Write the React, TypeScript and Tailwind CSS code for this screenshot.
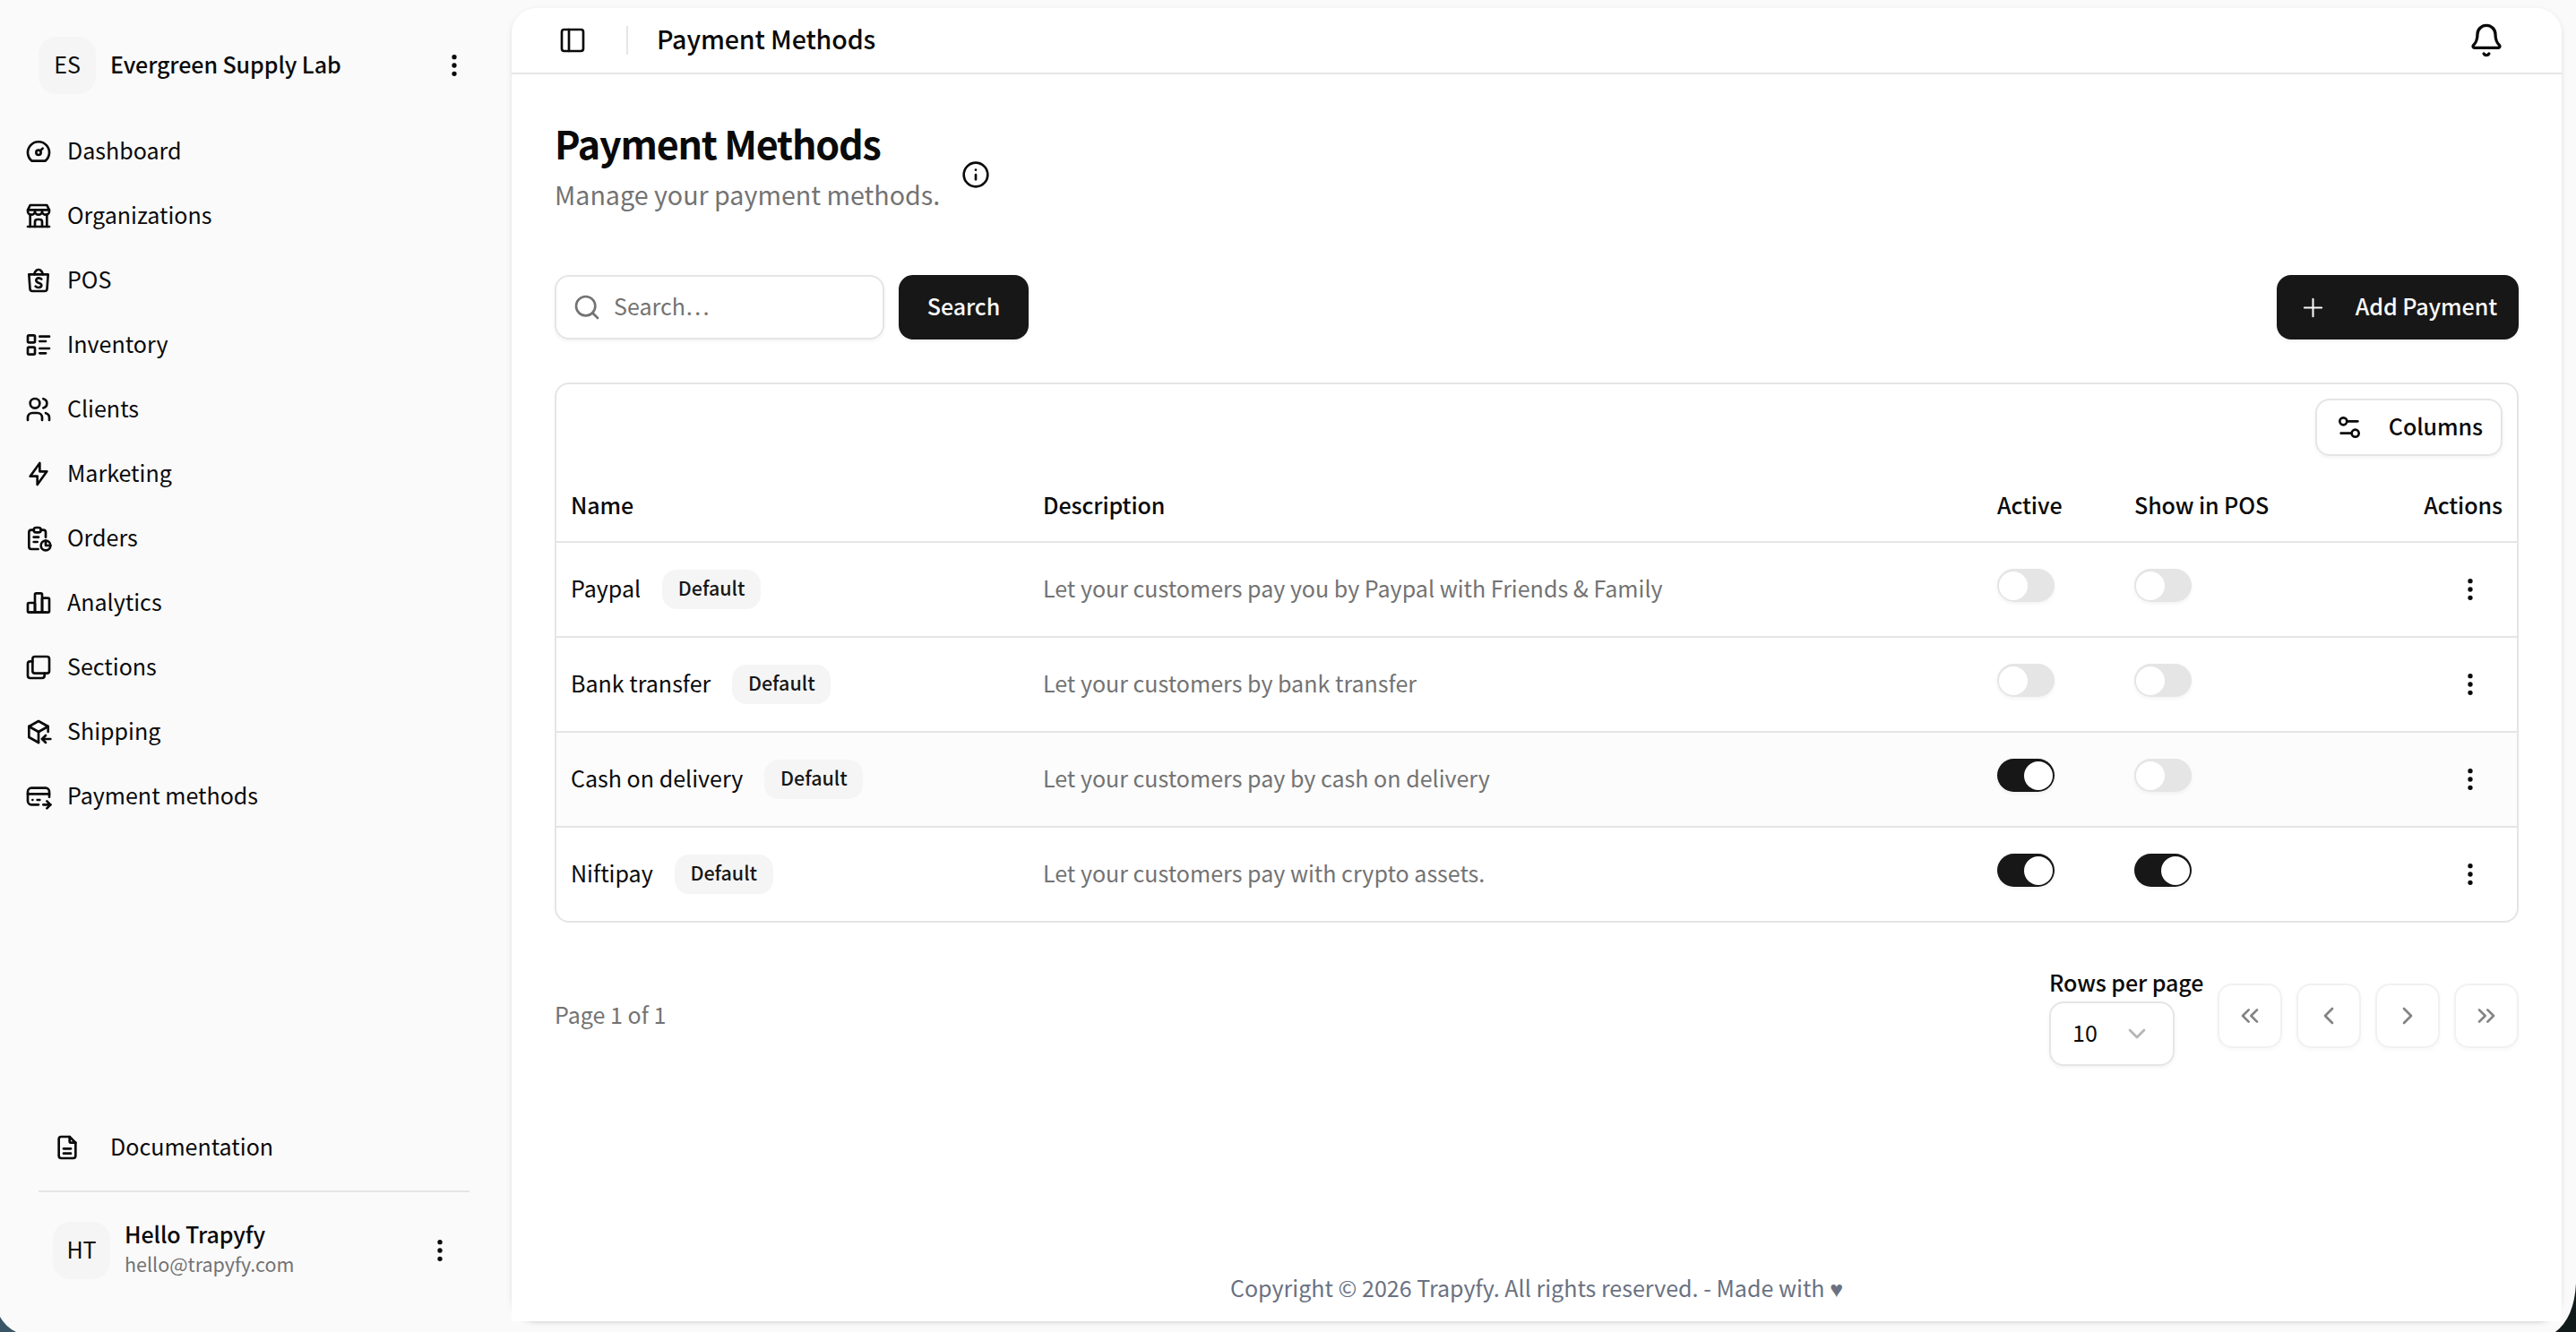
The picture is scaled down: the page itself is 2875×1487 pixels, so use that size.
import type { ReactNode } from "react";
import {
  Bell,
  ChevronDown,
  ChevronLeft,
  ChevronRight,
  ChevronsLeft,
  ChevronsRight,
  EllipsisVertical,
  Info,
  PanelLeft,
  Plus,
  Search,
  Settings2,
} from "lucide-react";
import {
  TbBolt,
  TbBoxMultiple,
  TbBrandShopee,
  TbBuildingStore,
  TbChartBar,
  TbCreditCardPay,
  TbDashboard,
  TbFileDescription,
  TbListDetails,
  TbPackageImport,
  TbReport,
  TbUsers,
} from "react-icons/tb";

const navItems = [
  { label: "Dashboard", icon: TbDashboard },
  { label: "Organizations", icon: TbBuildingStore },
  { label: "POS", icon: TbBrandShopee },
  { label: "Inventory", icon: TbListDetails },
  { label: "Clients", icon: TbUsers },
  { label: "Marketing", icon: TbBolt },
  { label: "Orders", icon: TbReport },
  { label: "Analytics", icon: TbChartBar },
  { label: "Sections", icon: TbBoxMultiple },
  { label: "Shipping", icon: TbPackageImport },
  { label: "Payment methods", icon: TbCreditCardPay },
];

const methods = [
  {
    name: "Paypal",
    description: "Let your customers pay you by Paypal with Friends & Family",
    active: false,
    pos: false,
  },
  {
    name: "Bank transfer",
    description: "Let your customers by bank transfer",
    active: false,
    pos: false,
  },
  {
    name: "Cash on delivery",
    description: "Let your customers pay by cash on delivery",
    active: true,
    pos: false,
    highlighted: true,
  },
  {
    name: "Niftipay",
    description: "Let your customers pay with crypto assets.",
    active: true,
    pos: true,
  },
];

const pagerIcons = [ChevronsLeft, ChevronLeft, ChevronRight, ChevronsRight];

function Avatar({ children }: { children: ReactNode }) {
  return (
    <div className="flex size-16 shrink-0 items-center justify-center rounded-[20px] bg-neutral-100">
      <span className="pb-1">{children}</span>
    </div>
  );
}

function Toggle({ on }: { on: boolean }) {
  return (
    <div
      className={
        on
          ? "mb-[9px] flex h-[37px] w-16 items-center justify-end rounded-full bg-neutral-900 px-0.5 shadow-[0_2px_4px_rgba(0,0,0,0.05)]"
          : "mb-[9px] flex h-[37px] w-16 items-center rounded-full bg-neutral-200 px-0.5 shadow-[0_2px_4px_rgba(0,0,0,0.05)]"
      }
    >
      <div className="size-8 rounded-full bg-white" />
    </div>
  );
}

function Sidebar() {
  return (
    <aside className="flex w-[571px] shrink-0 flex-col">
      <div className="mt-[41px] flex items-center pl-[43px] pr-12">
        <Avatar>ES</Avatar>
        <span className="ml-4 flex-1 pb-1 font-medium tracking-[-0.1px]">Evergreen Supply Lab</span>
        <EllipsisVertical size={32} />
      </div>

      <nav className="mt-7 flex flex-col pl-[27px]">
        {navItems.map(({ label, icon: Icon }) => (
          <div key={label} className="flex h-[72px] items-center gap-4">
            <Icon size={32} />
            <span className="pb-1">{label}</span>
          </div>
        ))}
      </nav>

      <div className="mt-auto flex items-center gap-8 pl-[59px]">
        <TbFileDescription size={32} />
        <span className="pb-1">Documentation</span>
      </div>
      <div className="mr-[47px] ml-[43px] mt-[26px] h-0.5 bg-neutral-200" />
      <div className="mb-14 mt-[29px] flex items-center pl-[59px] pr-16">
        <Avatar>HT</Avatar>
        <div className="ml-4 flex flex-1 flex-col pb-1">
          <span className="leading-[35px] font-medium tracking-[-0.1px]">Hello Trapyfy</span>
          <span className="text-[21.5px] leading-8 text-neutral-500">hello@trapyfy.com</span>
        </div>
        <EllipsisVertical size={32} />
      </div>
    </aside>
  );
}

function MethodsTable() {
  return (
    <div className="mt-12 overflow-hidden rounded-2xl border-2 border-neutral-200">
      <div className="flex h-24 items-center justify-end px-4">
        <button className="flex h-16 w-[209px] items-center justify-between rounded-2xl border-2 border-neutral-200 pl-[20px] pr-5 font-medium tracking-[-0.1px] shadow-[0_2px_4px_rgba(0,0,0,0.05)]">
          <Settings2 size={32} />
          <span className="pb-1">Columns</span>
        </button>
      </div>

      <div className="grid h-[81px] grid-cols-[527px_1065px_153px_1fr_auto] items-center border-b-2 border-neutral-200 pr-4 font-medium tracking-[-0.1px]">
        <span className="pb-1 pl-4">Name</span>
        <span className="pb-1 pl-4">Description</span>
        <span className="pb-1 pl-4">Active</span>
        <span className="pb-1 pl-4">Show in POS</span>
        <span className="pb-1">Actions</span>
      </div>

      {methods.map((m) => (
        <div
          key={m.name}
          className={
            m.highlighted
              ? "grid h-[106px] grid-cols-[527px_1065px_153px_1fr_auto] items-center border-b-2 border-neutral-200 bg-[#fcfcfc] pr-9"
              : "grid h-[106px] grid-cols-[527px_1065px_153px_1fr_auto] items-center border-b-2 border-neutral-200 pr-9 last:h-[104px] last:border-b-0"
          }
        >
          <div className="flex items-center gap-6 pl-4">
            <span className="pb-1">{m.name}</span>
            <span className="flex h-11 w-[110px] items-center justify-center rounded-2xl bg-neutral-100 pb-1 text-[21.5px] font-medium text-neutral-900">
              Default
            </span>
          </div>
          <span className="pb-1 pl-4 text-neutral-500">{m.description}</span>
          <div className="pl-4">
            <Toggle on={m.active} />
          </div>
          <div className="pl-4">
            <Toggle on={m.pos} />
          </div>
          <EllipsisVertical size={32} />
        </div>
      ))}
    </div>
  );
}

function Pagination() {
  return (
    <div className="mt-12 flex items-center justify-between">
      <span className="pb-1 text-neutral-500">Page 1 of 1</span>
      <div className="flex items-center gap-4">
        <div className="w-[172px]">
          <div className="h-10 leading-9 font-medium tracking-[-0.1px] whitespace-nowrap">Rows per page</div>
          <div className="flex h-[72px] w-[140px] items-center justify-between rounded-2xl border-2 border-neutral-200 px-6 shadow-[0_2px_4px_rgba(0,0,0,0.05)]">
            <span className="pb-1">10</span>
            <ChevronDown size={32} className="text-[#b5b5b5]" />
          </div>
        </div>
        {pagerIcons.map((Icon, i) => (
          <button
            key={i}
            disabled
            className="flex size-[72px] items-center justify-center rounded-2xl border-2 border-neutral-200 opacity-50 shadow-[0_2px_4px_rgba(0,0,0,0.05)]"
          >
            <Icon size={32} />
          </button>
        ))}
      </div>
    </div>
  );
}

export default function App() {
  return (
    <div className="relative flex h-[1487px] w-[2875px] overflow-hidden bg-neutral-50 font-['Noto_Sans_CJK_SC',sans-serif] text-[25.06px] leading-10 text-neutral-950">
      <Sidebar />

      <div className="mt-[9px] mb-3 mr-4 flex-1 rounded-[28px] shadow-[0_2px_6px_rgba(0,0,0,0.1),0_2px_4px_-2px_rgba(0,0,0,0.1)]">
        <main className="flex h-full flex-col rounded-t-[28px] bg-white">
          <header className="flex h-[74px] items-center border-b-2 border-neutral-200 pl-[52px] pr-16">
            <PanelLeft size={32} />
            <div className="ml-11 h-8 w-0.5 bg-neutral-200" />
            <span className="ml-8 flex-1 pb-1 text-[28.6px] font-medium tracking-[-0.12px]">
              Payment Methods
            </span>
            <Bell size={40} />
          </header>

          <div className="flex flex-1 flex-col px-12">
            <div className="mt-12 flex items-center gap-6">
              <div>
                <h1 className="mb-[5px] text-[43px] leading-[56px] font-bold tracking-[-1.2px]">
                  Payment Methods
                </h1>
                <p className="text-[28.65px] leading-[50px] text-neutral-500">
                  Manage your payment methods.
                </p>
              </div>
              <Info size={32} className="mt-[17px]" />
            </div>

            <div className="mt-[65px] flex items-center gap-4">
              <div className="flex h-[72px] w-[368px] items-center gap-3.5 rounded-2xl border-2 border-neutral-200 pl-[18px] text-neutral-500 shadow-[0_2px_4px_rgba(0,0,0,0.05)]">
                <Search size={32} />
                <span className="pb-1">Search…</span>
              </div>
              <button className="flex h-[72px] w-[145px] items-center justify-center rounded-2xl bg-neutral-900 font-medium tracking-[-0.1px] text-neutral-50 shadow-[0_2px_4px_rgba(0,0,0,0.05)]">
                <span className="pb-1">Search</span>
              </button>
              <button className="ml-auto flex h-[72px] w-[270px] items-center justify-between rounded-2xl bg-neutral-900 px-6 font-medium tracking-[-0.1px] text-neutral-50 shadow-[0_2px_4px_rgba(0,0,0,0.05)]">
                <Plus size={33} strokeWidth={1.5} />
                <span className="pb-1">Add Payment</span>
              </button>
            </div>

            <MethodsTable />
            <Pagination />

            <footer className="mt-auto pb-[18px] text-center text-gray-500">
              Copyright © 2026 Trapyfy. All rights reserved. - Made with{" "}
              <span className="font-['Liberation_Sans',sans-serif] leading-none">♥</span>
            </footer>
          </div>
        </main>
      </div>

      {/* desktop showing behind the rounded window corners */}
      <svg className="absolute bottom-0 left-0" width="18" height="17" viewBox="0 0 18 17">
        <path d="M0 0Q6 11 18 17H0Z" fill="#3a5666" />
      </svg>
      <svg className="absolute right-0 bottom-0" width="23" height="54" viewBox="0 0 23 54">
        <path d="M23 0Q21 38 0 54H23Z" fill="#111a1b" />
      </svg>
    </div>
  );
}
